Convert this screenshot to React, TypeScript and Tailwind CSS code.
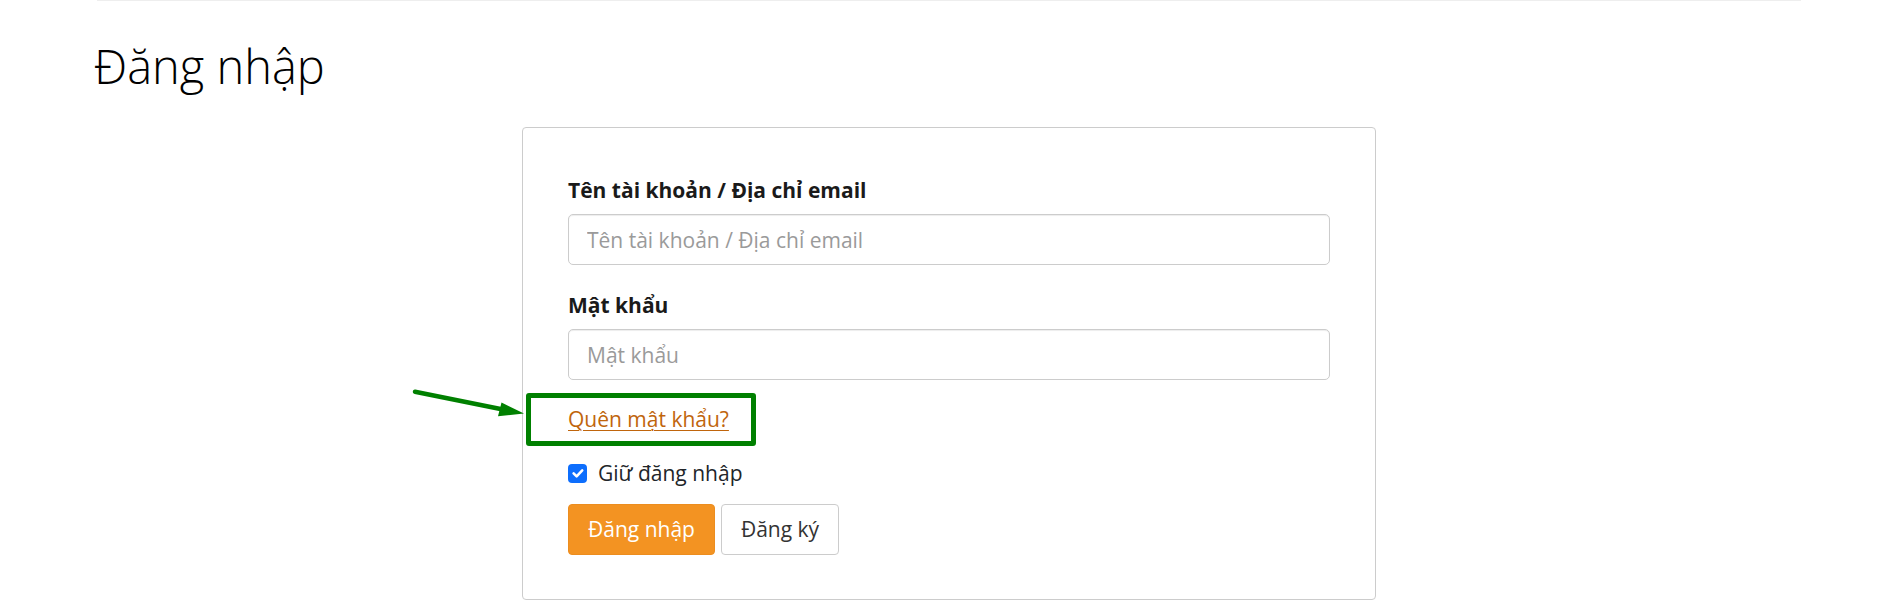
import React from "react";

export default function App() {
  return (
    <div
      className="relative w-[1898px] h-[607px] overflow-hidden bg-white text-[#212529]"
      style={{ fontFamily: '"Open Sans", "Noto Sans", sans-serif' }}
    >
      <div className="ml-[97px] w-[1704px] h-px bg-[#eeeeee]" />
      <div className="ml-[97px] w-[1704px]">
        <h1 className="-ml-[3px] mt-[37px] mb-[33px] text-[47px] leading-[56px] font-light text-black">
          Đăng nhập
        </h1>
      </div>

      <div className="mx-auto w-[854px] border border-[#cccccc] rounded-[4px] px-[45px] pt-[47px] pb-[44px]">
        <label className="block text-[21px] leading-[30px] font-bold text-[#1a1a1a] mb-[9px]">
          Tên tài khoản / Địa chỉ email
        </label>
        <input
          type="text"
          placeholder="Tên tài khoản / Địa chỉ email"
          className="block w-full h-[51px] border border-[#cccccc] rounded-[5px] px-[18px] text-[21px] outline-none shadow-[inset_0_1px_1px_rgba(0,0,0,0.075)] placeholder:text-[#9a9a9a]"
        />

        <label className="block mt-[25px] text-[21px] leading-[30px] font-bold text-[#1a1a1a] mb-[9px]">
          Mật khẩu
        </label>
        <input
          type="password"
          placeholder="Mật khẩu"
          className="block w-full h-[51px] border border-[#cccccc] rounded-[5px] px-[18px] text-[21px] outline-none shadow-[inset_0_1px_1px_rgba(0,0,0,0.075)] placeholder:text-[#9a9a9a]"
        />

        <div className="mt-[24px] h-[30px] text-[21px] leading-[30px]">
          <a href="#" className="text-[#c0650c] underline underline-offset-[3px] decoration-1">
            Quên mật khẩu?
          </a>
        </div>

        <div className="mt-[24px] h-[30px] flex items-center gap-[11px] text-[21px] leading-[30px]">
          <span className="flex items-center justify-center w-[19px] h-[19px] rounded-[4px] bg-[#0d6efd]">
            <svg width="16" height="16" viewBox="0 0 20 20" fill="none">
              <path d="M4.5 10.5l3.8 3.8l7-7.5" stroke="white" strokeWidth="3.2" strokeLinecap="round" strokeLinejoin="round" />
            </svg>
          </span>
          <span>Giữ đăng nhập</span>
        </div>

        <div className="mt-[16px] flex gap-[6px]">
          <button className="h-[51px] px-[19px] rounded-[4px] bg-[#f39322] border border-[#ec8d1f] text-white text-[21px]">
            Đăng nhập
          </button>
          <button className="h-[51px] px-[19px] rounded-[4px] bg-white border border-[#cccccc] text-[#333333] text-[21px]">
            Đăng ký
          </button>
        </div>
      </div>

      {/* annotation overlay */}
      <div className="absolute left-[526px] top-[393px] w-[230px] h-[53px] border-[5px] border-[#008000] rounded-[3px] pointer-events-none" />
      <svg className="absolute left-0 top-0 pointer-events-none" width="1898" height="607">
        <line x1="415" y1="391.7" x2="503" y2="409.5" stroke="#008000" strokeWidth="4.5" strokeLinecap="round" />
        <polygon points="501.5,402.5 498,416.3 524,413.5" fill="#008000" />
      </svg>
    </div>
  );
}
